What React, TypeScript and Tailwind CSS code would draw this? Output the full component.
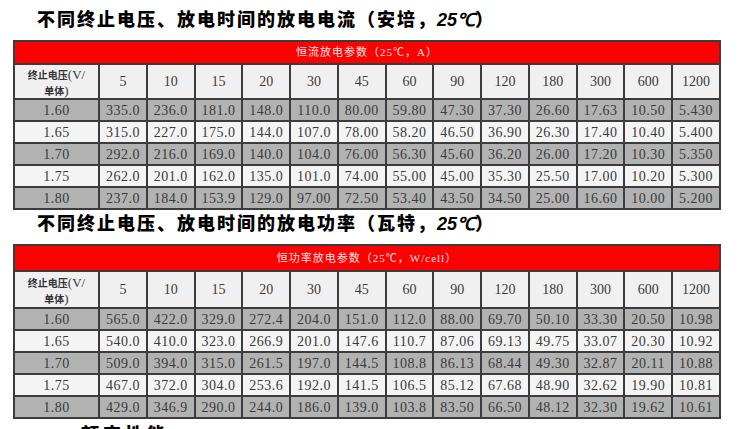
const cols = ["5", "10", "15", "20", "30", "45", "60", "90", "120", "180", "300", "600", "1200"];

const currentRows: [string, string[]][] = [
  ["1.60", ["335.0", "236.0", "181.0", "148.0", "110.0", "80.00", "59.80", "47.30", "37.30", "26.60", "17.63", "10.50", "5.430"]],
  ["1.65", ["315.0", "227.0", "175.0", "144.0", "107.0", "78.00", "58.20", "46.50", "36.90", "26.30", "17.40", "10.40", "5.400"]],
  ["1.70", ["292.0", "216.0", "169.0", "140.0", "104.0", "76.00", "56.30", "45.60", "36.20", "26.00", "17.20", "10.30", "5.350"]],
  ["1.75", ["262.0", "201.0", "162.0", "135.0", "101.0", "74.00", "55.00", "45.00", "35.30", "25.50", "17.00", "10.20", "5.300"]],
  ["1.80", ["237.0", "184.0", "153.9", "129.0", "97.00", "72.50", "53.40", "43.50", "34.50", "25.00", "16.60", "10.00", "5.200"]],
];

const powerRows: [string, string[]][] = [
  ["1.60", ["565.0", "422.0", "329.0", "272.4", "204.0", "151.0", "112.0", "88.00", "69.70", "50.10", "33.30", "20.50", "10.98"]],
  ["1.65", ["540.0", "410.0", "323.0", "266.9", "201.0", "147.6", "110.7", "87.06", "69.13", "49.75", "33.07", "20.30", "10.92"]],
  ["1.70", ["509.0", "394.0", "315.0", "261.5", "197.0", "144.5", "108.8", "86.13", "68.44", "49.30", "32.87", "20.11", "10.88"]],
  ["1.75", ["467.0", "372.0", "304.0", "253.6", "192.0", "141.5", "106.5", "85.12", "67.68", "48.90", "32.62", "19.90", "10.81"]],
  ["1.80", ["429.0", "346.9", "290.0", "244.0", "186.0", "139.0", "103.8", "83.50", "66.50", "48.12", "32.30", "19.62", "10.61"]],
];

const serif = "font-['Liberation_Serif','Noto_Sans_CJK_SC',serif]";

function Title({ text, unit }: { text: string; unit: string }) {
  return (
    <h2 className="pl-[37px] text-[18px] font-black tracking-[2px] leading-[20px] text-black font-['Noto_Sans_CJK_SC',sans-serif]">
      {text}（{unit}，<span className="italic font-['Liberation_Sans',sans-serif] tracking-normal">25℃</span>）
    </h2>
  );
}

function DataTable({ caption, rows, redH, headH }: { caption: string; rows: [string, string[]][]; redH: string; headH: string }) {
  return (
    <div className="ml-[13px] w-[708px] border-2 border-[#3c3c3c] bg-[#3c3c3c]">
      <div className={`${redH} bg-[#ff0000] flex items-center justify-center text-[11px] text-[#ffe6e6] tracking-[1px] ${serif}`}>
        {caption}
      </div>
      <div className="grid grid-cols-[83px_repeat(13,1fr)] gap-[2px] pt-[2px]">
        <div className={`${headH} bg-[#f0f0f0] flex flex-col items-center justify-center leading-[15px] text-[#333]`}>
          <span>
            <span className="text-[10px] font-bold font-['Noto_Sans_CJK_SC',sans-serif]">终止电压</span>
            <span className={`text-[13px] ${serif}`}>(V/</span>
          </span>
          <span>
            <span className="text-[10px] font-bold font-['Noto_Sans_CJK_SC',sans-serif]">单体</span>
            <span className={`text-[13px] ${serif}`}>)</span>
          </span>
        </div>
        {cols.map((c) => (
          <div key={c} className={`${headH} bg-[#f0f0f0] flex items-center justify-center text-[14px] text-[#3a3a3a] ${serif}`}>
            {c}
          </div>
        ))}
        {rows.map(([v, vals], i) => {
          const bg = i % 2 === 0 ? "bg-[#b2b2b2]" : "bg-[#f4f4f4]";
          return [
            <div key={v} className={`h-[20px] ${bg} flex items-center justify-center text-[14px] text-[#3a3a3a] tracking-[0.5px] ${serif}`}>
              {v}
            </div>,
            ...vals.map((x, j) => (
              <div key={v + j} className={`h-[20px] ${bg} flex items-center justify-center text-[14px] text-[#3a3a3a] tracking-[0.5px] ${serif}`}>
                {x}
              </div>
            )),
          ];
        })}
      </div>
    </div>
  );
}

export default function App() {
  return (
    <div className="w-[750px] h-[429px] overflow-hidden bg-white pt-[8px]">
      <Title text="不同终止电压、放电时间的放电电流" unit="安培" />
      <div className="mt-[10px]">
        <DataTable caption="恒流放电参数（25℃，A）" rows={currentRows} redH="h-[21px]" headH="h-[33px]" />
      </div>
      <div className="mt-[2px]">
        <Title text="不同终止电压、放电时间的放电功率" unit="瓦特" />
      </div>
      <div className="mt-[10px]">
        <DataTable caption="恒功率放电参数（25℃，W/cell）" rows={powerRows} redH="h-[24px]" headH="h-[35px]" />
      </div>
      <div className="mt-[4px] pl-[37px] text-[18px] font-black tracking-[4px] leading-[20px] font-['Noto_Sans_CJK_SC',sans-serif]">
        一、额定性能
      </div>
    </div>
  );
}
